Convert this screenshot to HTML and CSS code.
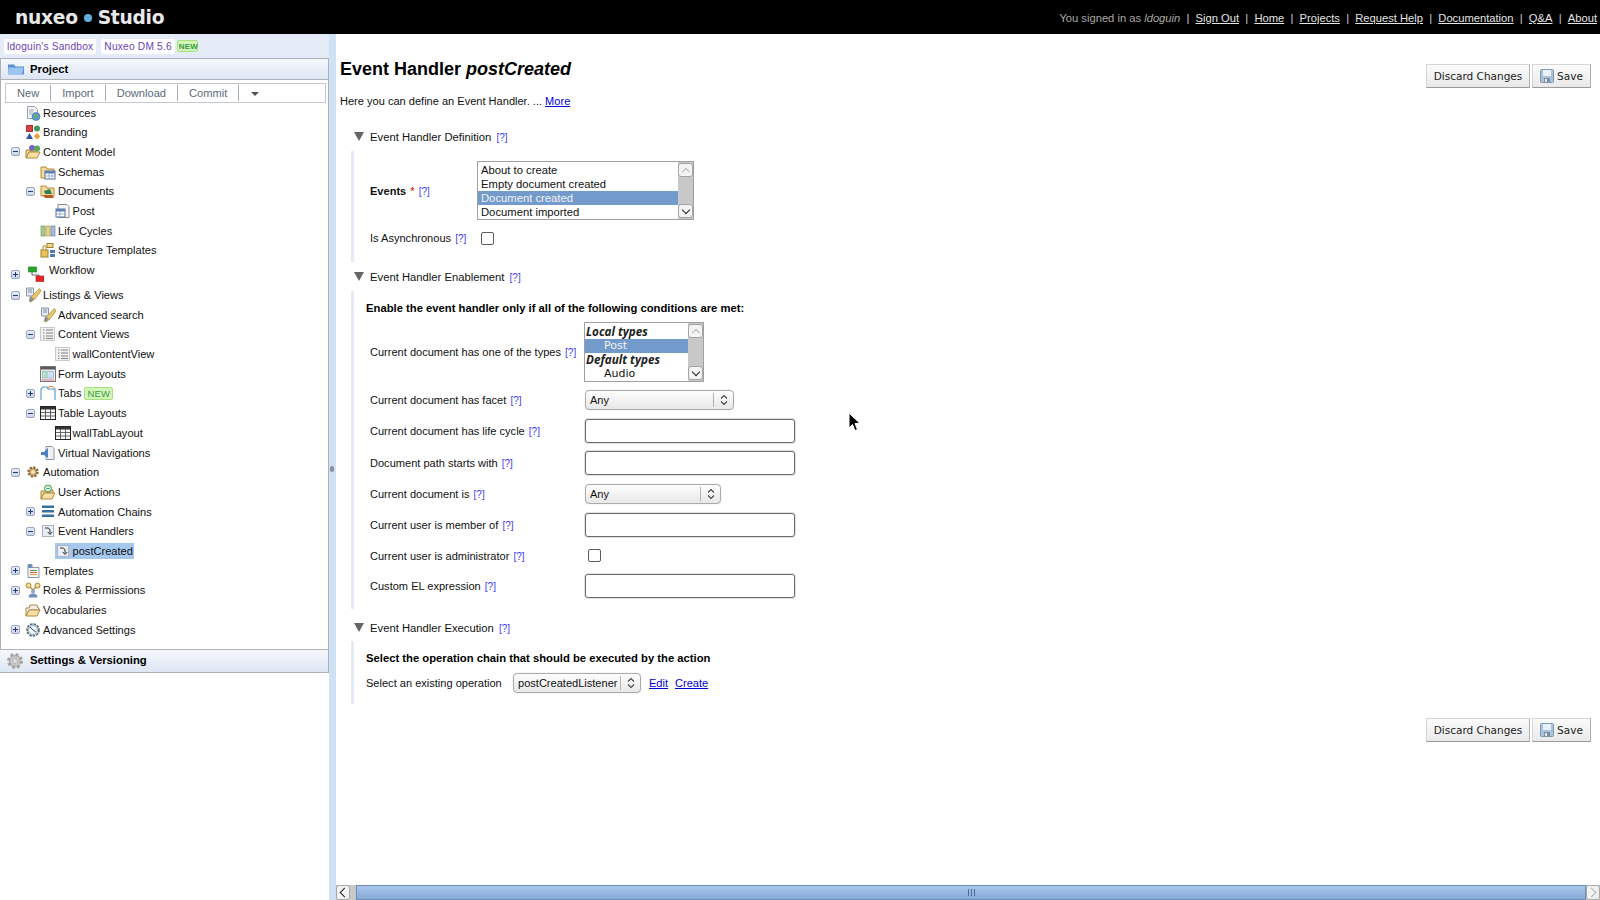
FILE: index.html
```html
<!DOCTYPE html>
<html lang="en">
<head>
  <meta charset="UTF-8">
  <title>Nuxeo Studio</title>
  <link rel="stylesheet" href="styles.css">
</head>
<body>
  <!-- icon sprite -->
  <svg class="sprite" width="0" height="0">
    <symbol id="i-res" viewBox="0 0 16 16"><path d="M2.5 1.5h7l3 3v9h-10z" fill="#f3f3f3" stroke="#9aa0a8"/><path d="M4 5h5M4 7h4M4 9h3" stroke="#9ab" /><circle cx="11" cy="11.5" r="4" fill="#5b9bd0" stroke="#3a6e9c" stroke-width=".6"/><path d="M9 10l2-1 2 2-2 3-1-2z" fill="#6fb04e"/></symbol>
    <symbol id="i-brand" viewBox="0 0 16 16"><rect x="1.5" y="1.5" width="6" height="6" fill="#d8404a" stroke="#a33"/><circle cx="12" cy="4.5" r="3" fill="#3f9a5a"/><path d="M4.5 9l3.500 6h-7z" fill="#2f55a5"/><path d="M12 9l3.200 3.200-3.200 3.200-3.200-3.200z" fill="#e4a030"/></symbol>
    <symbol id="i-cm" viewBox="0 0 16 16"><path d="M1 6h5l1-1h5v3H4L1 14z" fill="#f3d28c" stroke="#b08a3c"/><path d="M1 14l3-6h11l-3 6z" fill="#f7dfa6" stroke="#b08a3c"/><circle cx="7" cy="4" r="3" fill="#7a66b8"/><circle cx="12" cy="4.500" r="3" fill="#5aa85a"/></symbol>
    <symbol id="i-schema" viewBox="0 0 16 16"><path d="M1 14V3h5l1 2h7v9z" fill="#f5d998" stroke="#b8893a"/><rect x="5" y="7" width="10" height="8" fill="#fff" stroke="#54739a"/><path d="M5 7h10v2.500H5z" fill="#5b83b5"/><path d="M5 12h10M9 9v6M12 9v6" stroke="#7f9abc" stroke-width=".7"/></symbol>
    <symbol id="i-docs" viewBox="0 0 16 16"><path d="M1 13V3h5l1 2h7v8z" fill="#f5d998" stroke="#b8893a"/><path d="M4 8l6-2 2 5H5z" fill="#2f7f5a"/><path d="M3 12h9l2 3H5z" fill="#b5562a"/></symbol>
    <symbol id="i-post" viewBox="0 0 16 16"><path d="M3 1.500h9l2 2v11H3z" fill="#f4f4f4" stroke="#8a8f96"/><rect x="1" y="6" width="9" height="8" fill="#fff" stroke="#54739a"/><path d="M1 6h9v2.500H1z" fill="#5b83b5"/><path d="M1 11h9M5 8v6" stroke="#7f9abc" stroke-width=".7"/></symbol>
    <symbol id="i-life" viewBox="0 0 16 16"><rect x="1" y="3" width="4" height="10" fill="#a8c98a" stroke="#7d9a62" stroke-width=".7"/><rect x="6" y="3" width="4" height="10" fill="#e6d28a" stroke="#a89a5a" stroke-width=".7"/><rect x="11" y="3" width="4" height="10" fill="#a8bcd8" stroke="#7088a8" stroke-width=".7"/></symbol>
    <symbol id="i-struct" viewBox="0 0 16 16"><rect x="1" y="8" width="7" height="7" fill="#e8c25c" stroke="#a5822c"/><path d="M3 8V5a1.500 1.500 0 0 1 3 0v3" fill="none" stroke="#a5822c"/><rect x="7" y="1.500" width="6" height="4" fill="#f0d88a" stroke="#a5822c"/><rect x="10" y="8" width="5" height="3" fill="#4c7cb0"/><rect x="10" y="12" width="5" height="3" fill="#4c7cb0"/></symbol>
    <symbol id="i-flow" viewBox="0 0 16 16"><rect x=".5" y="1" width="8" height="5" fill="#25a52a" stroke="#167a1a" stroke-width=".6"/><path d="M4 6v3h7v2" fill="none" stroke="#666"/><rect x="8" y="10" width="8" height="5.500" fill="#e8262a" stroke="#a81418" stroke-width=".6"/></symbol>
    <symbol id="i-search" viewBox="0 0 16 16"><path d="M1.500 1h7v8h-7z" fill="#e4e8f0" stroke="#8c96a8"/><path d="M3 3h4M3 5h4" stroke="#7d8ca5"/><path d="M14.500 1.500L7 9l-3 5 2 1 4-3 6-8z" fill="#e6c572" stroke="#a88a3a" stroke-width=".7"/><path d="M5 9l4 3-3 3-2-1z" fill="#8f8f8f"/></symbol>
    <symbol id="i-views" viewBox="0 0 16 16"><rect x=".5" y="1.500" width="14" height="13" fill="#f1f1f1" stroke="#c9c9c9"/><path d="M3 4h1.500M6 4h7M3 7h1.500M6 7h7M3 10h1.500M6 10h7M3 12.500h1.500M6 12.500h7" stroke="#777" stroke-width=".9"/></symbol>
    <symbol id="i-form" viewBox="0 0 16 16"><rect x=".5" y=".5" width="15" height="15" fill="#ececec" stroke="#777"/><path d="M1 1h14v2.500H1z" fill="#5a5a5a"/><rect x="2.500" y="5.500" width="3.500" height="6.500" fill="#bfe6d0" stroke="#7bb596" stroke-width=".6"/><rect x="7" y="5.500" width="6.500" height="6.500" fill="#cfe0f5" stroke="#88a8cf" stroke-width=".6"/><path d="M2 14h12" stroke="#e08aa5" stroke-width="1.200"/></symbol>
    <symbol id="i-tabs" viewBox="0 0 16 16"><path d="M1 15V4l2-2h4l1 2h7v11" fill="none" stroke="#4f94cf" stroke-width="1.100"/><path d="M8 4l1-2.500h4l2 2.500" fill="none" stroke="#e08a50"/></symbol>
    <symbol id="i-table" viewBox="0 0 16 16"><rect x=".5" y="1.500" width="15" height="13" fill="#f7f7f7" stroke="#222"/><path d="M1 2h14v2.500H1z" fill="#333"/><path d="M1 7.500h14M1 11h14M5.500 4v10M10.500 4v10" stroke="#444" stroke-width=".8"/></symbol>
    <symbol id="i-vnav" viewBox="0 0 16 16"><path d="M6 1.500h6l2 2v11H6z" fill="#eef1f5" stroke="#8a96a8"/><path d="M1 7h3l4-4v10L4 10H1z" fill="#4f7fc0"/></symbol>
    <symbol id="i-auto" viewBox="0 0 16 16"><circle cx="8" cy="8" r="4.500" fill="#c8a46c" stroke="#8a6a38" stroke-width="2.400" stroke-dasharray="2 1.500"/><circle cx="8" cy="8" r="2" fill="#f3e4c6"/></symbol>
    <symbol id="i-action" viewBox="0 0 16 16"><path d="M1 7h4l1-1h7v3H4l-3 6z" fill="#f3d28c" stroke="#b08a3c"/><path d="M1 15l3-6h11l-3 6z" fill="#f7dfa6" stroke="#b08a3c"/><circle cx="8" cy="4.500" r="3.500" fill="#d6ecd8" stroke="#3f9a5a"/><path d="M6.500 4.500h3" stroke="#3f9a5a"/></symbol>
    <symbol id="i-chain" viewBox="0 0 16 16"><path d="M2 1.500h12v2.500H2zM2 6h12v2.500H2zM2 10.500h12V13H2z" fill="#3a70a8"/></symbol>
    <symbol id="i-handler" viewBox="0 0 16 16"><rect x="2.500" y="2.500" width="11" height="11" fill="#e9eef5" stroke="#a8b2c0"/><path d="M5 5h3.500l1.500 2v3.500M7.800 9l2.200 2.500L12.200 9" fill="none" stroke="#333"/></symbol>
    <symbol id="i-tmpl" viewBox="0 0 16 16"><path d="M3 1.500h4v3h7v10H3z" fill="#f6f6f6" stroke="#8a96a8"/><path d="M3 2h4v3H3z" fill="#6b8fb8"/><path d="M5 7.500h7" stroke="#5a9a5a"/><path d="M5 9.500h7" stroke="#d9534f"/><path d="M5 11.500h7" stroke="#e0a030"/></symbol>
    <symbol id="i-roles" viewBox="0 0 16 16"><circle cx="3.500" cy="3.500" r="2.500" fill="#f0d98a" stroke="#a88a3a"/><circle cx="12.500" cy="3.500" r="2.500" fill="#f0d98a" stroke="#a88a3a"/><path d="M5 5l3 3M11 5L8 8" stroke="#a88a3a" stroke-width="1.200"/><circle cx="8" cy="9.500" r="2" fill="#8fa8c8"/><path d="M3.500 15.500c0-3 2-4 4.500-4s4.500 1 4.500 4z" fill="#6f8fb8"/></symbol>
    <symbol id="i-vocab" viewBox="0 0 16 16"><path d="M1 6h3l1-3h7l1 3h1v2H4l-3 6z" fill="#eee" stroke="#b08a3c"/><path d="M1 14l3-6h11l-3 6z" fill="#f7dfa6" stroke="#b08a3c"/></symbol>
    <symbol id="i-adv" viewBox="0 0 16 16"><circle cx="8" cy="8" r="6" fill="#dbe6ee" stroke="#54697c" stroke-width="1.600" stroke-dasharray="2.500 1"/><circle cx="8" cy="8" r="4.500" fill="#eef3f6" stroke="#6f8496" stroke-width=".6"/><path d="M8 8L5 5M8 8l3 2" stroke="#3a5068"/></symbol>
    <symbol id="i-gear" viewBox="0 0 18 18"><circle cx="9" cy="9" r="6.200" fill="#b5b5b5" stroke="#a2a2a2" stroke-width="3.400" stroke-dasharray="2.600 2.250"/><circle cx="9" cy="9" r="4.800" fill="#c9c9c9"/><circle cx="9" cy="9" r="2.500" fill="#dcdcdc" stroke="#a5a5a5" stroke-width=".6"/></symbol>
    <symbol id="i-folder" viewBox="0 0 16 14"><path d="M0 2.500h6l1.500 2H16v8H0z" fill="#5a8fd0"/><path d="M.5 5.500h15l-1.500 7.500H0z" fill="#9cc5ef"/></symbol>
    <symbol id="i-save" viewBox="0 0 14 14"><rect x=".5" y=".5" width="13" height="13" rx="1" fill="#a9c3dc" stroke="#8098b4"/><rect x="3" y="1" width="8" height="6" fill="#e9f0f7"/><rect x="4" y="9" width="6" height="4.500" fill="#7f8e9e"/><rect x="5" y="10" width="2" height="3" fill="#dfe6ee"/></symbol>
    <symbol id="i-updown" viewBox="0 0 8 12"><path d="M1 4.500L4 1.500l3 3M1 7.500l3 3 3-3" fill="none" stroke="#444" stroke-width="1.100"/></symbol>
  </svg>

  <header class="topbar">
    <div class="logo">nuxeo<span class="logo-dot"></span>Studio</div>
    <nav class="toplinks">
      <span>You signed in as <em>ldoguin</em></span><i>|</i><a href="#">Sign Out</a><i>|</i><a href="#">Home</a><i>|</i><a href="#">Projects</a><i>|</i><a href="#">Request Help</a><i>|</i><a href="#">Documentation</a><i>|</i><a href="#">Q&amp;A</a><i>|</i><a href="#">About</a>
    </nav>
  </header>

  <div class="page">
    <aside class="sidebar">
      <div class="tagstrip">
        <span class="tag">ldoguin's Sandbox</span>
        <span class="tag tag-dm">Nuxeo DM 5.6</span>
        <span class="newflag small">NEW</span>
      </div>

      <div class="panelbar project"><svg class="panelicon"><use href="#i-folder"/></svg>Project</div>

      <div class="panelbody">
        <div class="toolbar">
          <span class="tool">New</span><span class="tool">Import</span><span class="tool">Download</span><span class="tool">Commit</span><span class="tool caret"></span>
        </div>

        <div class="tree">
          <div class="row l0"><span class="tg"></span><svg class="ic"><use href="#i-res"/></svg><span class="lbl">Resources</span></div>
          <div class="row l0"><span class="tg"></span><svg class="ic"><use href="#i-brand"/></svg><span class="lbl">Branding</span></div>
          <div class="row l0"><span class="tg minus"></span><svg class="ic"><use href="#i-cm"/></svg><span class="lbl">Content Model</span></div>
          <div class="row l1"><span class="tg"></span><svg class="ic"><use href="#i-schema"/></svg><span class="lbl">Schemas</span></div>
          <div class="row l1"><span class="tg minus"></span><svg class="ic"><use href="#i-docs"/></svg><span class="lbl">Documents</span></div>
          <div class="row l2"><svg class="ic"><use href="#i-post"/></svg><span class="lbl">Post</span></div>
          <div class="row l1"><span class="tg"></span><svg class="ic"><use href="#i-life"/></svg><span class="lbl">Life Cycles</span></div>
          <div class="row l1"><span class="tg"></span><svg class="ic"><use href="#i-struct"/></svg><span class="lbl">Structure Templates</span></div>
          <div class="row l0 workflow"><span class="tg plus"></span><svg class="ic"><use href="#i-flow"/></svg><span class="lbl">Workflow</span></div>
          <div class="row l0"><span class="tg minus"></span><svg class="ic"><use href="#i-search"/></svg><span class="lbl">Listings &amp; Views</span></div>
          <div class="row l1"><span class="tg"></span><svg class="ic"><use href="#i-search"/></svg><span class="lbl">Advanced search</span></div>
          <div class="row l1"><span class="tg minus"></span><svg class="ic"><use href="#i-views"/></svg><span class="lbl">Content Views</span></div>
          <div class="row l2"><svg class="ic"><use href="#i-views"/></svg><span class="lbl">wallContentView</span></div>
          <div class="row l1"><span class="tg"></span><svg class="ic"><use href="#i-form"/></svg><span class="lbl">Form Layouts</span></div>
          <div class="row l1"><span class="tg plus"></span><svg class="ic"><use href="#i-tabs"/></svg><span class="lbl">Tabs</span><span class="newflag">NEW</span></div>
          <div class="row l1"><span class="tg minus"></span><svg class="ic"><use href="#i-table"/></svg><span class="lbl">Table Layouts</span></div>
          <div class="row l2"><svg class="ic"><use href="#i-table"/></svg><span class="lbl">wallTabLayout</span></div>
          <div class="row l1"><span class="tg"></span><svg class="ic"><use href="#i-vnav"/></svg><span class="lbl">Virtual Navigations</span></div>
          <div class="row l0"><span class="tg minus"></span><svg class="ic"><use href="#i-auto"/></svg><span class="lbl">Automation</span></div>
          <div class="row l1"><span class="tg"></span><svg class="ic"><use href="#i-action"/></svg><span class="lbl">User Actions</span></div>
          <div class="row l1"><span class="tg plus"></span><svg class="ic"><use href="#i-chain"/></svg><span class="lbl">Automation Chains</span></div>
          <div class="row l1"><span class="tg minus"></span><svg class="ic"><use href="#i-handler"/></svg><span class="lbl">Event Handlers</span></div>
          <div class="row l2 current"><svg class="ic"><use href="#i-handler"/></svg><span class="lbl">postCreated</span></div>
          <div class="row l0"><span class="tg plus"></span><svg class="ic"><use href="#i-tmpl"/></svg><span class="lbl">Templates</span></div>
          <div class="row l0"><span class="tg plus"></span><svg class="ic"><use href="#i-roles"/></svg><span class="lbl">Roles &amp; Permissions</span></div>
          <div class="row l0"><span class="tg"></span><svg class="ic"><use href="#i-vocab"/></svg><span class="lbl">Vocabularies</span></div>
          <div class="row l0"><span class="tg plus"></span><svg class="ic"><use href="#i-adv"/></svg><span class="lbl">Advanced Settings</span></div>
        </div>
      </div>

      <div class="panelbar settings"><svg class="panelicon gear"><use href="#i-gear"/></svg>Settings &amp; Versioning</div>
    </aside>

    <div class="splitter"><span class="grip"></span></div>

    <main class="main">
      <div class="content">
        <div class="head">
          <div>
            <h1>Event Handler <em>postCreated</em></h1>
            <p class="intro">Here you can define an Event Handler. ... <a href="#">More</a></p>
          </div>
          <div class="actions">
            <button class="btn discard">Discard Changes</button>
            <button class="btn save"><svg class="saveicon"><use href="#i-save"/></svg>Save</button>
          </div>
        </div>

        <h2 class="sect first"><span class="arrow"></span>Event Handler Definition <a class="help" href="#">[?]</a></h2>
        <div class="sectbody def">
          <div class="frow listrow">
            <label class="events"><b>Events</b> <span class="req">*</span> <a class="help" href="#">[?]</a></label>
            <div class="listbox events-list">
              <div class="opts">
                <div>About to create</div>
                <div>Empty document created</div>
                <div class="sel">Document created</div>
                <div>Document imported</div>
              </div>
              <div class="vbar">
                <span class="sbtn up"></span>
                <span class="sbtn down"></span>
              </div>
            </div>
          </div>
          <div class="frow asyncrow">
            <label class="events">Is Asynchronous <a class="help" href="#">[?]</a></label>
            <input class="check async" type="checkbox">
          </div>
        </div>

        <h2 class="sect second"><span class="arrow"></span>Event Handler Enablement <a class="help" href="#">[?]</a></h2>
        <div class="sectbody enable">
          <p class="note">Enable the event handler only if all of the following conditions are met:</p>
          <div class="frow typesrow">
            <label>Current document has one of the types <a class="help" href="#">[?]</a></label>
            <div class="listbox types-list">
              <div class="opts">
                <div class="grp">Local types</div>
                <div class="sel sub">Post</div>
                <div class="grp">Default types</div>
                <div class="sub">Audio</div>
              </div>
              <div class="vbar">
                <span class="sbtn up"></span>
                <span class="sbtn down"></span>
              </div>
            </div>
          </div>
          <div class="frow">
            <label>Current document has facet <a class="help" href="#">[?]</a></label>
            <div class="select facet"><span>Any</span><span class="sarrow"><svg><use href="#i-updown"/></svg></span></div>
          </div>
          <div class="frow">
            <label>Current document has life cycle <a class="help" href="#">[?]</a></label>
            <input class="field" type="text">
          </div>
          <div class="frow pathrow">
            <label>Document path starts with <a class="help" href="#">[?]</a></label>
            <input class="field" type="text">
          </div>
          <div class="frow">
            <label>Current document is <a class="help" href="#">[?]</a></label>
            <div class="select docis"><span>Any</span><span class="sarrow"><svg><use href="#i-updown"/></svg></span></div>
          </div>
          <div class="frow">
            <label>Current user is member of <a class="help" href="#">[?]</a></label>
            <input class="field" type="text">
          </div>
          <div class="frow short">
            <label>Current user is administrator <a class="help" href="#">[?]</a></label>
            <input class="check admin" type="checkbox">
          </div>
          <div class="frow">
            <label>Custom EL expression <a class="help" href="#">[?]</a></label>
            <input class="field" type="text">
          </div>
        </div>

        <h2 class="sect third"><span class="arrow"></span>Event Handler Execution <a class="help" href="#">[?]</a></h2>
        <div class="sectbody exec">
          <p class="note">Select the operation chain that should be executed by the action</p>
          <div class="oprow">
            <label>Select an existing operation</label>
            <div class="select opsel"><span>postCreatedListener</span><span class="sarrow"><svg><use href="#i-updown"/></svg></span></div>
            <a href="#">Edit</a>
            <a href="#">Create</a>
          </div>
        </div>

        <div class="actions bottom">
          <button class="btn discard">Discard Changes</button>
          <button class="btn save"><svg class="saveicon"><use href="#i-save"/></svg>Save</button>
        </div>
      </div>

      <div class="hscroll">
        <span class="hbtn left"></span>
        <span class="hgap"></span>
        <span class="hthumb"><span class="hgrip"></span></span>
        <span class="hbtn right"></span>
      </div>
    </main>
  </div>

  <!-- mouse pointer caught in the screenshot -->
  <svg class="pointer" width="14" height="20" viewBox="0 0 14 20"><path d="M1 1v15l3.500-3.500 2.500 6 2.500-1-2.500-6h5z" fill="#000" stroke="#fff"/></svg>
</body>
</html>
```

FILE: styles.css
```css
:root {
  --text: #111;
  --link: #0000d8;
  --help: #3b3bf5;
  --split: #cfe2f5;
  --line: #aeb2b6;
  --bar: #e5ecf7;
}

* {
  box-sizing: border-box;
}

html, body {
  margin: 0;
  height: 100%;
}

body {
  width: 1600px;
  height: 900px;
  overflow: hidden;
  position: relative;
  background: #fff;
  color: var(--text);
  font-family: "Liberation Sans", Arial, sans-serif;
  font-size: 11.25px;
}

.sprite {
  position: absolute;
}

/* top bar */
.topbar {
  height: 34px;
  background: #000;
  display: flex;
  justify-content: space-between;
  align-items: center;
  padding: 0 3px 0 15px;
}

.logo {
  display: flex;
  align-items: center;
  color: #e8e8e8;
  font-family: "DejaVu Sans", sans-serif;
  font-weight: bold;
  font-size: 18.7px;
  letter-spacing: -0.3px;
}

.logo-dot {
  width: 8px;
  height: 8px;
  margin: 1px 6px 0;
  border-radius: 50%;
  background: #62b0de;
}

.toplinks {
  display: flex;
  align-items: center;
  padding-top: 2px;
  color: #a8a8a8;
  font-size: 11.2px;
}

.toplinks a {
  color: #e4e4e4;
}

.toplinks i {
  font-style: normal;
  margin: 0 6.2px;
  color: #ccc;
}

/* sidebar */
.page {
  display: flex;
  height: 866px;
}

.sidebar {
  width: 329px;
  display: flex;
  flex-direction: column;
}

.tagstrip {
  height: 24px;
  background: var(--bar);
  display: flex;
  align-items: center;
  padding: 0 0 0 4px;
}

.tag {
  background: #fff;
  color: #6b3fb8;
  font-size: 10.2px;
  letter-spacing: 0.2px;
  height: 15px;
  line-height: 15px;
  padding: 0 3px;
  border-radius: 2px;
  margin-right: 5px;
}

.tag-dm {
  margin-right: 2px;
}

.newflag {
  display: inline-block;
  background: #d3f5b8;
  border: 1px solid #a8e080;
  border-radius: 2px;
  color: #3a9a4a;
  font-size: 9.5px;
  line-height: 11px;
  padding: 0 2px;
  margin-left: 3px;
  font-weight: normal;
  letter-spacing: 0.2px;
}

.newflag.small {
  font-size: 8px;
  font-weight: bold;
  margin-left: 0;
  padding: 0 1px;
  width: 21px;
  height: 12px;
  text-align: center;
}

.panelbar {
  display: flex;
  align-items: center;
  font-weight: bold;
  font-size: 11.3px;
  background: linear-gradient(#f6f8fc, #dde6f4);
  border: 1px solid var(--line);
  color: #000;
}

.project {
  height: 22px;
}

.settings {
  height: 24px;
  padding-bottom: 2px;
  border-left: 0;
}

.panelicon {
  width: 16px;
  height: 14px;
  margin: 0 6px 0 7px;
}

.panelicon.gear {
  width: 18px;
  height: 18px;
  margin: 2px 6px 0 6px;
}

.panelbody {
  height: 569px;
  border: 1px solid var(--line);
  border-width: 0 1px;
  padding-top: 3px;
}

.toolbar {
  height: 20px;
  margin: 0 2px 0 4px;
  border: 1px solid #c4c8cc;
  display: flex;
  align-items: center;
  font-size: 11.1px;
  color: #5b6a78;
}

.tool {
  padding: 0 11px;
  height: 16px;
  line-height: 16px;
  border-right: 1px solid #a8acb0;
}

.tool.caret {
  position: relative;
  width: 30px;
  border: 0;
}

.tool.caret::after {
  content: "";
  position: absolute;
  left: 12px;
  top: 7px;
  border: 4px solid transparent;
  border-top-color: #555;
  border-bottom: 0;
}

.tree {
  margin: -0.3px 0 0 -1px;
  font-size: 11.1px;
}

.row {
  display: flex;
  align-items: center;
  height: 19.7px;
  white-space: nowrap;
}

.l0 {
  padding-left: 10px;
}

.l1 {
  padding-left: 24.5px;
}

.l2 {
  padding-left: 54.5px;
}

.tg {
  width: 11px;
  height: 9px;
  flex: none;
  margin-right: 2px;
}

.tg.minus, .tg.plus {
  width: 9px;
  margin: 0 3px 0 1px;
  border: 1px solid #9aa6c4;
  border-radius: 2px;
  background: linear-gradient(to bottom, #e6ebf6 0, #cdd5e8 100%);
  position: relative;
}

.tg.minus::after, .tg.plus::after {
  content: "";
  position: absolute;
  left: 1px;
  right: 1px;
  top: 3px;
  height: 1px;
  background: #223a78;
}

.tg.plus::before {
  content: "";
  position: absolute;
  top: 1px;
  bottom: 1px;
  left: 3px;
  width: 1px;
  background: #223a78;
}

.ic {
  width: 16px;
  height: 16px;
  flex: none;
  margin-right: 2px;
}

.l0 .ic {
  margin-left: 2px;
}

.l1 .ic {
  margin-left: 2.5px;
}

.lbl {
  color: #111;
}

.workflow {
  height: 25px;
}

.l0.workflow .ic {
  margin: 3px 6px 0 5px;
}

.workflow .tg {
  margin-top: 3px;
}

.workflow .lbl {
  margin: -5px 0 0 -1px;
}

.current .ic {
  margin-right: 0;
  background: #a6c8ee;
}

.current .lbl {
  background: #a6c8ee;
  line-height: 16px;
  padding: 0 1px 0 2px;
}

/* splitter */
.splitter {
  width: 7px;
  background: var(--split);
  position: relative;
}

.grip {
  position: absolute;
  left: 1px;
  top: 432px;
  width: 4px;
  height: 6px;
  background: #8d9096;
  border-radius: 2px;
}

/* main */
.main {
  flex: 1;
  display: flex;
  flex-direction: column;
  min-width: 0;
}

.content {
  flex: 1;
  padding: 24px 9px 0 4px;
}

.head {
  display: flex;
  justify-content: space-between;
}

h1 {
  margin: 0 0 13px;
  font-size: 18px;
  line-height: 22px;
  color: #000;
}

.intro {
  margin: 0;
  font-size: 11.05px;
  line-height: 16px;
}

a {
  color: var(--link);
}

.help {
  color: var(--help);
  font-size: 10px;
  text-decoration: none;
  margin-left: 1px;
}

.actions {
  display: flex;
  justify-content: flex-end;
  gap: 2px;
  margin-top: 6px;
}

.actions.bottom {
  margin-top: 14px;
}

.btn {
  height: 24px;
  padding: 0;
  justify-content: center;
  font-family: "DejaVu Sans", sans-serif;
  font-size: 10.5px;
  color: #222;
  background: linear-gradient(#fbfbfb, #e9e9e9);
  border: 1px solid #d6d6d6;
  border-bottom-color: #9a9a9a;
  border-right-color: #b0b0b0;
  border-radius: 0;
  display: flex;
  align-items: center;
}

.btn.discard {
  width: 104px;
}

.btn.save {
  width: 59px;
}

.saveicon {
  width: 14px;
  height: 14px;
  margin-right: 3px;
}

.sect {
  display: flex;
  align-items: center;
  margin: 0;
  height: 16px;
  padding-left: 18px;
  font-size: 11.25px;
  font-weight: normal;
  white-space: pre;
}

.sect .help {
  margin-left: 2px;
}

.sect.first {
  margin: 20px 0 6px;
}

.sect.second {
  margin: 7px 0 6px;
}

.sect.third {
  margin: 11px 0 5px;
}

.arrow {
  width: 0;
  height: 0;
  margin-right: 6px;
  margin-left: -4px;
  border: 5.5px solid transparent;
  border-top: 9px solid #666;
  border-bottom: 0;
  margin-top: -1px;
}

.sectbody {
  margin-left: 11px;
  border-left: 3px solid #e4ebf6;
}

.def {
  padding: 10px 0 18px 16px;
  height: 111px;
}

.enable {
  padding-top: 9px;
  height: 318px;
}

.exec {
  padding-top: 9px;
  height: 63px;
}

.note {
  margin: 0 0 6px 12px;
  line-height: 16px;
  font-weight: bold;
  color: #000;
}

.frow {
  display: flex;
  align-items: center;
  height: 31px;
  padding-left: 16px;
}

.frow label {
  width: 215px;
  flex: none;
  font-size: 11.05px;
}

.def .frow {
  padding-left: 0;
}

.def label {
  width: 107px;
}

.listrow {
  height: 59px;
}

.asyncrow {
  height: 12px;
  margin-top: 12px;
}

.typesrow {
  height: 60px;
  margin-bottom: 2.5px;
}

.pathrow {
  margin-top: 1px;
}

.short {
  height: 30px;
}

.req {
  color: #d00;
  margin-left: 1px;
}

.check {
  appearance: none;
  -webkit-appearance: none;
  margin: 0;
  width: 13px;
  height: 13px;
  background: #fff;
  border: 1px solid #5c5c5c;
  border-radius: 2px;
}

.check.async {
  margin-left: 4px;
}

.check.admin {
  margin-left: 3px;
}

.field {
  width: 210px;
  height: 24px;
  padding: 0 4px;
  background: #fff;
  border: 1px solid #6c6c6c;
  border-radius: 3px;
  box-shadow: 0 0 0 1px #e2e2e2;
}

.select {
  height: 20px;
  display: flex;
  justify-content: space-between;
  align-items: center;
  border: 1px solid #aaa;
  border-radius: 4px;
  padding-left: 4px;
  font-size: 11.05px;
  background: linear-gradient(#fdfdfd, #e8e8e8);
  box-shadow: 0 0 1px #bbb;
}

.select.facet {
  width: 149px;
}

.select.docis {
  width: 136px;
}

.select.opsel {
  width: 128px;
  margin: 0 8px 0 0;
}

.sarrow {
  width: 20px;
  height: 14px;
  border-left: 1px solid #b4b4b4;
  display: flex;
  align-items: center;
  justify-content: center;
}

.sarrow svg {
  width: 8px;
  height: 12px;
}

.listbox {
  display: flex;
  border: 1px solid #a0a0a0;
  background: #fff;
}

.events-list {
  width: 217px;
  height: 59px;
}

.types-list {
  width: 120px;
  height: 60px;
  margin-left: -1px;
}

.opts {
  flex: 1;
  padding-top: 1px;
}

.opts div {
  height: 14px;
  line-height: 14px;
  padding-left: 3px;
}

.opts .sel {
  background: #729bcc;
  color: #f2f2f2;
}

.types-list .opts div {
  font-family: "DejaVu Sans", sans-serif;
  font-size: 11px;
}

.types-list .opts {
  padding-top: 2px;
}

.types-list .opts .grp {
  font-family: "Open Sans", sans-serif;
  font-size: 11.7px;
  font-weight: bold;
  font-style: italic;
  line-height: 12px;
  padding-left: 1px;
  color: #222;
}

.opts .sub {
  padding-left: 19px;
}

.vbar {
  width: 15px;
  background: #c8c8c8;
  display: flex;
  flex-direction: column;
  justify-content: space-between;
  padding: 1px 0;
  flex: none;
}

.sbtn {
  height: 14px;
  background: #f4f4f4;
  border: 1px solid #a4a4a4;
  border-radius: 3px;
  position: relative;
}

.sbtn::after {
  content: "";
  position: absolute;
  left: 4px;
  width: 5px;
  height: 5px;
  border: solid #222;
  border-width: 0 1.5px 1.5px 0;
  transform: rotate(45deg);
  top: 2px;
}

.sbtn.up::after {
  border-color: #bbb;
  transform: rotate(225deg);
  top: 5px;
}

.oprow {
  display: flex;
  align-items: center;
  height: 20px;
  margin: 7px 0 0 12px;
  font-size: 11.05px;
}

.oprow label {
  width: 147px;
}

.oprow a + a {
  margin-left: 7px;
}

/* bottom scrollbar */
.hscroll {
  height: 15px;
  display: flex;
  background: #c8c8c8;
}

.hbtn {
  width: 14px;
  background: #f2f2f2;
  border: 1px solid #a6a6a6;
  border-radius: 3px;
  position: relative;
  flex: none;
}

.hbtn::after {
  content: "";
  position: absolute;
  top: 3px;
  width: 6px;
  height: 6px;
  border: solid #222;
  border-width: 0 0 1.5px 1.5px;
  transform: rotate(45deg);
  left: 4px;
}

.hbtn.right::after {
  transform: rotate(225deg);
  border-color: #b4b4b4;
  left: 1px;
}

.hgap {
  width: 6px;
  flex: none;
}

.hthumb {
  flex: 1;
  background: linear-gradient(#a9c7ea, #85a9d6);
  border: 1px solid #6f8db5;
  display: flex;
  justify-content: center;
  align-items: center;
}

.hgrip {
  width: 7px;
  height: 7px;
  background: repeating-linear-gradient(to right, #4e6c94 0 1px, transparent 1px 3px);
}

.pointer {
  position: absolute;
  left: 848px;
  top: 412px;
}
```
